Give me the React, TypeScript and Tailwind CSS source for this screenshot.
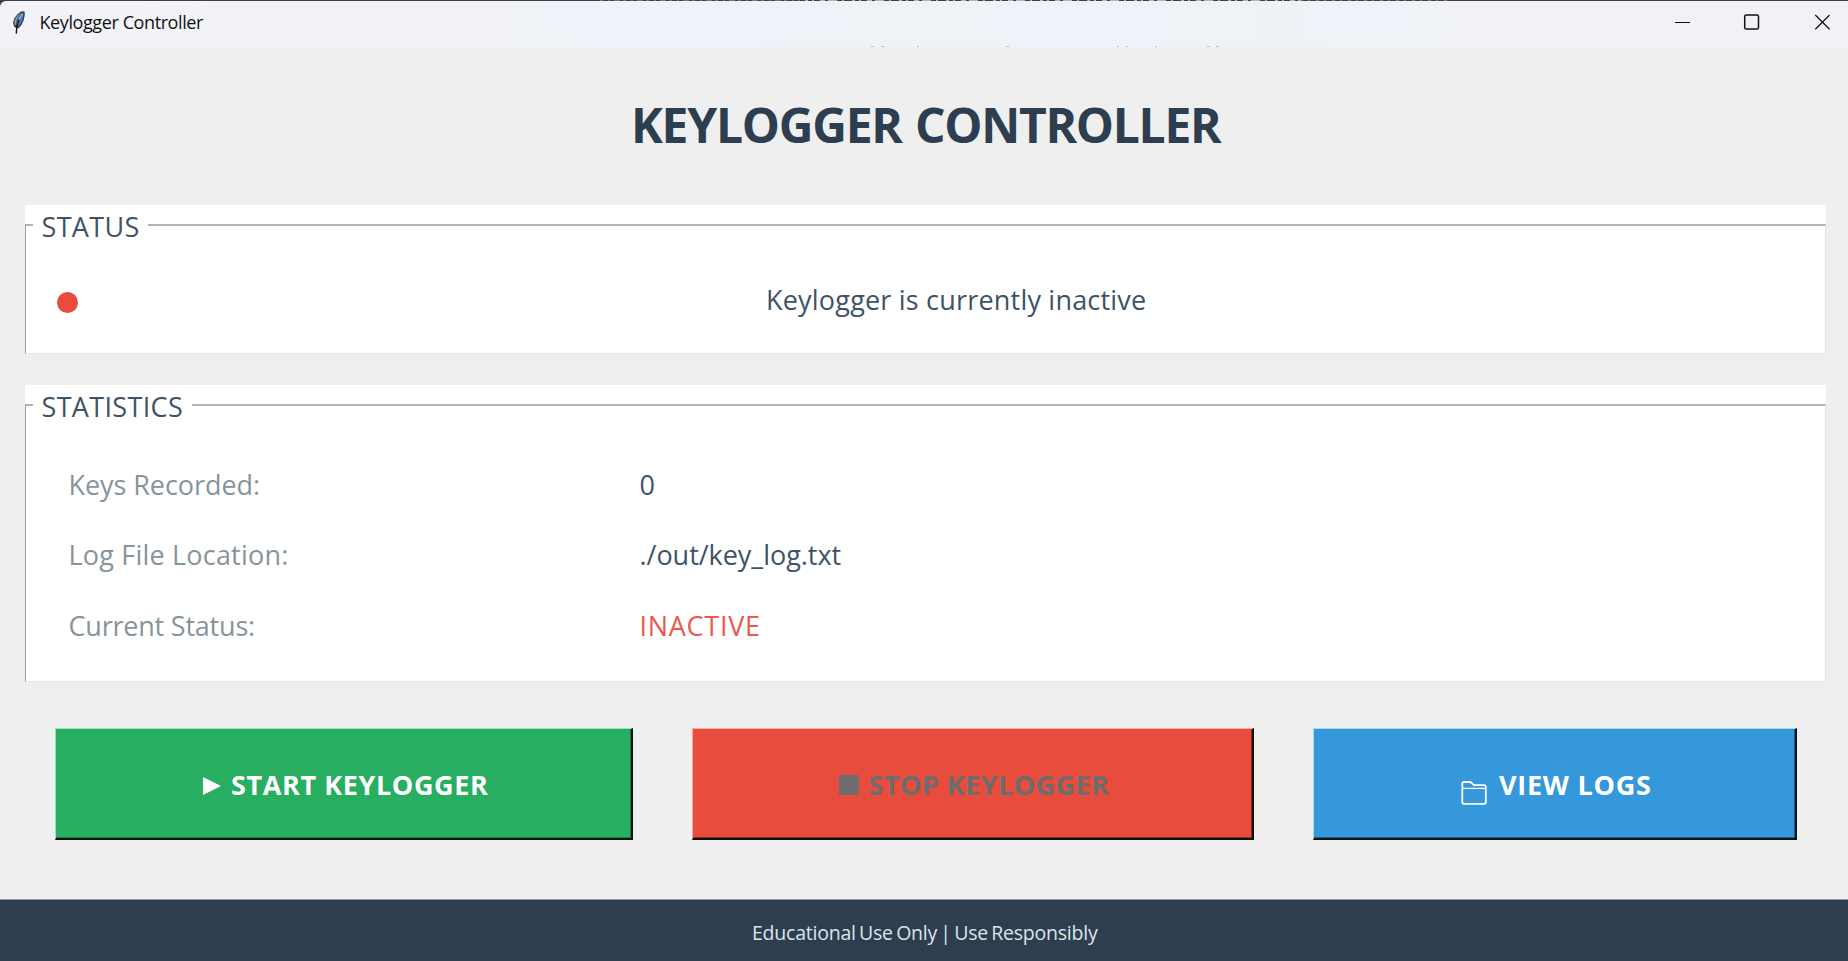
import type { ReactNode } from "react";

function FeatherIcon() {
  return (
    <svg className="ml-[11px] h-[25px] w-4 shrink-0" viewBox="0 0 16 25">
      <path d="M12.8 1.2 L13.8 2 L13.7 5.5 L12.6 10.5 L10.6 14.8 L8 18 L5.4 18.6 L3 16.2 L2 12.6 L3.4 8.2 L6.6 4 L10 1.6 Z" fill="#3d4248" />
      <path d="M12.2 2.4 L12.4 5.4 L11.4 10 L9.4 14 L7.2 16.6 L6 14 L7 8.6 L9.2 4.2 Z" fill="#3f7cc9" />
      <path d="M11 2.6 L7.6 6 L5.6 10.4 L5 15.4 L3.6 14.2 L3.4 11.6 L4.8 8 L7.6 4.4 Z" fill="#8d9aa6" />
      <path d="M11.4 4 L8.2 9 L6.6 14" stroke="#8fc0f5" strokeWidth="1.2" fill="none" />
      <path d="M8 9.6 L5.8 17 L5.3 23.6" stroke="#15181c" strokeWidth="1.4" fill="none" />
    </svg>
  );
}

function TitleBar() {
  return (
    <header className="h-[47px] shrink-0 bg-[#3f3e43]">
      <svg className="block h-px w-full" viewBox="0 0 1848 1" preserveAspectRatio="none">
        <path d="M600 .5H800" stroke="#77777b" strokeDasharray="3 5 2 4 6 3" />
        <path d="M805 .5H1300" stroke="#b4b4b8" strokeDasharray="3 4 2 6 5 3 9 5 2 8" />
        <path d="M1300 .5H1450" stroke="#85858a" strokeDasharray="3 5 2 6" />
      </svg>
      <div className="flex h-[45px] items-center rounded-tl-md bg-linear-to-r from-[#f3f2f9] from-0% via-[#edf3f8] via-60% to-[#f1f2f8] to-85% pb-[3px]">
        <FeatherIcon />
        <span className="ml-[12.5px] text-[18px] leading-6 tracking-[-0.406px] text-[#111]">Keylogger Controller</span>
        <svg className="ml-auto mr-[18px] h-4 w-[155px] shrink-0" viewBox="0 0 155 16" fill="none" stroke="#111" strokeWidth="1.25">
          <path d="M0 8.5H15" strokeWidth="1" />
          <rect x="69.7" y="1" width="13.8" height="14" rx="1.6" strokeWidth="1.5" />
          <path d="M140.3 1L154.6 15.3M154.6 1L140.3 15.3" />
        </svg>
      </div>
      <svg className="block h-px w-full bg-[#f0f3f8]" viewBox="0 0 1848 1" preserveAspectRatio="none">
        <path d="M871 .5H874M881 .5H885M917 .5H919M1006 .5H1009M1117 .5H1119M1126 .5H1128M1155 .5H1157M1207 .5H1210M1216 .5H1219" stroke="#bfc3c8" />
      </svg>
    </header>
  );
}

function Panel({ title, className, children }: { title: ReactNode; className: string; children: ReactNode }) {
  return (
    <section className={`bg-white pt-px ${className}`}>
      <fieldset className="h-full border border-t-2 border-b-[#e3e3e3] border-l-[#a0a0a0] border-r-[#e3e3e3] border-t-[#b2b2b2]">
        <legend className="ml-[7px] px-[8.5px] text-[27px] leading-[37px] tracking-[0.34px] text-[#3f5368]">
          <span className="relative top-[2px]">{title}</span>
        </legend>
        {children}
      </fieldset>
    </section>
  );
}

function Stat({ label, value, labelClass, valueClass }: { label: string; value: string; labelClass: string; valueClass: string }) {
  return (
    <div className="flex h-[70.3px] text-[27px] leading-[37px]">
      <dt className={`w-[571px] text-[#87949a] ${labelClass}`}>{label}</dt>
      <dd className={valueClass}>{value}</dd>
    </div>
  );
}

function BevelButton({ className, children }: { className: string; children: ReactNode }) {
  return (
    <button className={`flex h-[112px] shrink-0 items-center border border-b-2 border-r-2 border-b-[#0c1410] border-r-[#0c1410] pt-[2px] text-[27px] font-bold leading-[37px] ${className}`}>
      {children}
    </button>
  );
}

export default function App() {
  return (
    <div className="flex h-[961px] w-[1848px] flex-col overflow-hidden bg-[#efefef] font-['Open_Sans','Noto_Sans',sans-serif]">
      <TitleBar />
      <main className="flex flex-1 flex-col px-[25px] pr-[22px]">
        <h1 className="mt-[45px] ml-[606px] text-[48px] font-bold leading-[65px] tracking-[-1.27px] whitespace-nowrap text-[#2c3e50] [word-spacing:2px]">
          KEYLOGGER CONTROLLER
        </h1>

        <Panel title="STATUS" className="mt-[48px] h-[149px]">
          <div className="flex items-center pt-[38px] pl-[30.5px] leading-[37px]">
            <span className="mt-[5px] size-[21px] rounded-full bg-[#e74c3c]" />
            <span className="ml-[688.5px] text-[27px] tracking-[0.2px] text-[#3f5368]">Keylogger is currently inactive</span>
          </div>
        </Panel>

        <Panel title="STATISTICS" className="mt-[31px] h-[297px]">
          <dl className="pt-[43px] pl-[42.5px]">
            <Stat label="Keys Recorded:" value="0" labelClass="tracking-[-0.07px]" valueClass="text-[#3f5368]" />
            <Stat label="Log File Location:" value="./out/key_log.txt" labelClass="tracking-[0.2px]" valueClass="tracking-[-0.037px] text-[#3f5368]" />
            <Stat label="Current Status:" value="INACTIVE" labelClass="tracking-[-0.21px]" valueClass="tracking-[0.72px] text-[#ea5a4b]" />
          </dl>
        </Panel>

        <div className="mt-[46px] ml-[30px] flex">
          <BevelButton className="w-[577.5px] border-l-[#92e8b4] border-t-[#92e8b4] bg-[#27ae60] pl-[146.5px] tracking-[0.61px] text-white shadow-[inset_-1px_-1px_0_#167a40]">
            <svg className="mt-[3px] h-[18px] w-[18px]" viewBox="0 0 18 18"><path d="M0 0L18 9L0 18Z" fill="currentColor" /></svg>
            <span className="ml-[10.5px]">START KEYLOGGER</span>
          </BevelButton>
          <BevelButton className="ml-[59.5px] w-[561.5px] border-l-[#f5aaa2] border-t-[#f5aaa2] bg-[#e74c3c] pl-[146px] tracking-[0.44px] text-[#6d6d6d] shadow-[inset_-1px_-1px_0_#8c2a20]">
            <span className="mt-px size-5 bg-[#6d6d6d]" />
            <span className="ml-[9.5px]">STOP KEYLOGGER</span>
          </BevelButton>
          <BevelButton className="ml-[59.5px] w-[483.5px] border-l-[#a3d8fb] border-t-[#a3d8fb] bg-[#3498db] pl-[146.5px] tracking-[0.75px] text-white shadow-[inset_-1px_-1px_0_#1b5f90]">
            <svg className="mt-[16px] h-6 w-[26px]" viewBox="0 0 26 24" fill="none" stroke="currentColor" strokeWidth="1.8">
              <path d="M1.3 21.2V2.6Q1.3 1 2.9 1H8.6Q9.7 1 10.5 1.8L13 4.2H23Q24.8 4.2 24.8 6V21.2Q24.8 22.8 23.2 22.8H2.9Q1.3 22.8 1.3 21.2Z" />
              <path d="M1.5 7.4H24.5" strokeWidth="1.3" />
            </svg>
            <span className="ml-[12.5px]">VIEW LOGS</span>
          </BevelButton>
        </div>
      </main>
      <footer className="h-[62px] shrink-0 border-t border-[#8c969c] bg-[#2c3e50] pt-[19px] pl-[752px] text-[19.5px] leading-[27px] tracking-[-0.23px] text-[#dfe4e6] [word-spacing:-1.5px]">
        Educational Use Only | Use Responsibly
      </footer>
    </div>
  );
}
